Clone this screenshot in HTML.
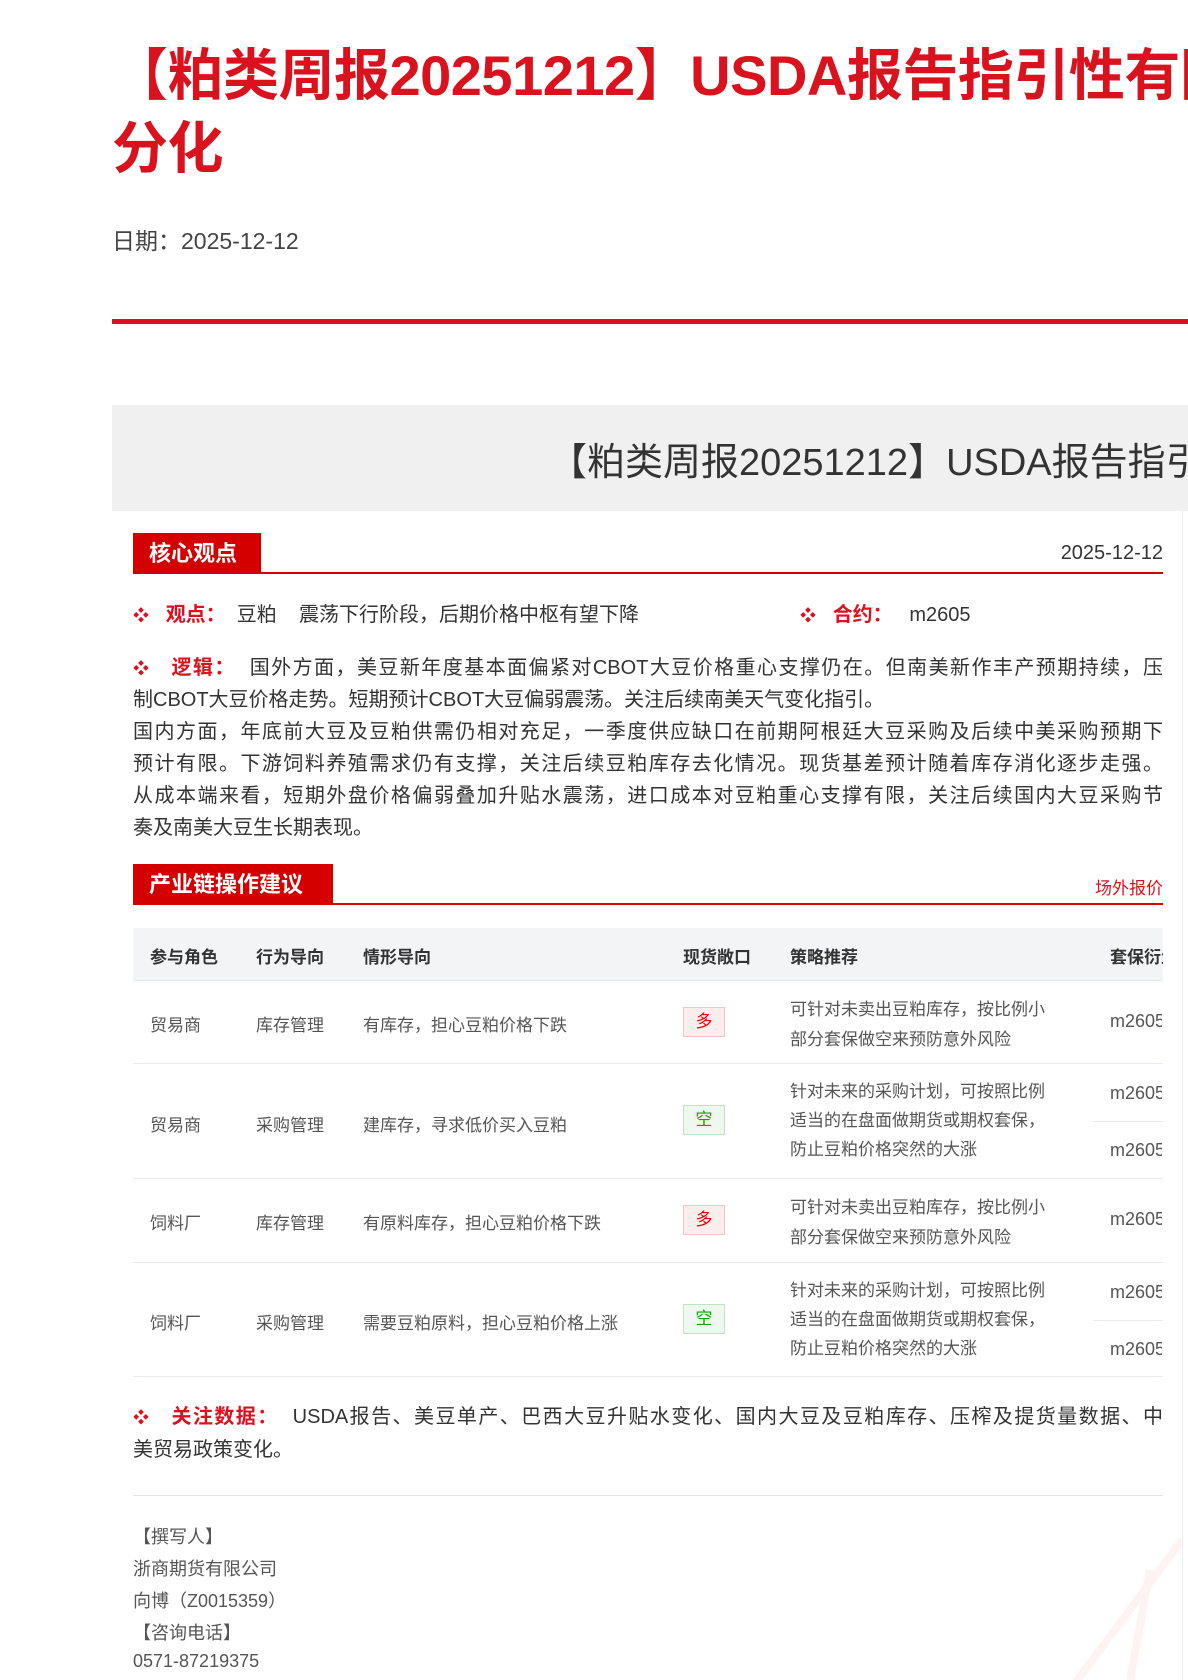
<!DOCTYPE html>
<html><head><meta charset="utf-8">
<style>
*{margin:0;padding:0;box-sizing:border-box}
html,body{width:1188px;height:1680px;overflow:hidden}
body{background:#fff;font-family:"Liberation Sans","Noto Sans CJK SC",sans-serif;color:#333}
#w{position:relative;width:1188px;height:1680px;overflow:hidden}
.a{position:absolute;white-space:nowrap}
.t{font-size:56px;font-weight:bold;color:#d9121e;left:112px;line-height:73px;letter-spacing:-0.5px;width:1076px;overflow:hidden}
.red{color:#d9121e}
.tag{position:absolute;background:#d40000;color:#fff;font-weight:bold;font-size:22px;line-height:41px;padding-left:16px}
.hl{position:absolute;height:2px;background:#d40000;left:133px;width:1030px}
.b{font-size:20px;color:#333}
.bul{color:#d9121e;font-size:16px}
.lab{color:#d9121e;font-weight:bold}
.lg{position:absolute;left:133px;width:1030px;font-size:20px;line-height:32px;color:#333;white-space:nowrap;text-align:justify;text-align-last:justify}
.th{font-size:17px;font-weight:bold;color:#333}
.td{font-size:17px;color:#555}
.rl{position:absolute;left:133px;width:1030px;height:1px;background:#e6e9ee}
.bd{position:absolute;width:42px;height:30px;font-size:17px;text-align:center;line-height:28px;border:1px solid}
.duo{color:#e00;background:#fdeeee;border-color:#f6c4c4}
.kong{color:#1a9a1a;background:#eef8ee;border-color:#bfe4bf}
.ft{font-size:18px;color:#555;left:133px}
.m{font-size:18px;color:#555;width:52px;overflow:hidden;left:1110px}
</style></head><body><div id="w">
<div class="a t" style="top:39px">【粕类周报20251212】USDA报告指引性有限，豆粕走势分化</div>
<div class="a t" style="top:112px">分化</div>
<div class="a" style="left:112px;top:222px;font-size:23px;color:#444">日期：2025-12-12</div>
<div class="a" style="left:112px;top:319px;width:1076px;height:5px;background:#d9121e"></div>

<div class="a" style="left:112px;top:405px;width:1076px;height:106px;background:#f0f0f0"></div>
<div class="a" style="left:549px;top:435px;font-size:38px;color:#333;line-height:56px;width:639px;overflow:hidden">【粕类周报20251212】USDA报告指引性有限</div>
<div class="a" style="left:1182px;top:511px;width:1px;height:1169px;background:#eee"></div>

<div class="tag" style="left:133px;top:533px;width:128px">核心观点</div>
<div class="hl" style="top:572px"></div>
<div class="a b" style="right:25px;top:542px">2025-12-12</div>

<div class="a b" style="left:133px;top:600px;line-height:30px"><span class="bul">❖</span>&nbsp;&nbsp;&nbsp;<span class="lab">观点：</span>&nbsp;&nbsp;豆粕&nbsp;&nbsp;&nbsp;&nbsp;震荡下行阶段，后期价格中枢有望下降</div>
<div class="a b" style="left:800px;top:600px;line-height:30px"><span class="bul">❖</span>&nbsp;&nbsp;&nbsp;<span class="lab">合约：</span>&nbsp;&nbsp;&nbsp;m2605</div>

<div class="lg" style="top:652px"><span class="bul">❖</span>&nbsp;&nbsp;&nbsp;<span class="lab">逻辑：</span>&nbsp;&nbsp;国外方面，美豆新年度基本面偏紧对CBOT大豆价格重心支撑仍在。但南美新作丰产预期持续，压</div>
<div class="lg" style="top:684px;text-align-last:left">制CBOT大豆价格走势。短期预计CBOT大豆偏弱震荡。关注后续南美天气变化指引。</div>
<div class="lg" style="top:716px">国内方面，年底前大豆及豆粕供需仍相对充足，一季度供应缺口在前期阿根廷大豆采购及后续中美采购预期下</div>
<div class="lg" style="top:748px">预计有限。下游饲料养殖需求仍有支撑，关注后续豆粕库存去化情况。现货基差预计随着库存消化逐步走强。</div>
<div class="lg" style="top:780px">从成本端来看，短期外盘价格偏弱叠加升贴水震荡，进口成本对豆粕重心支撑有限，关注后续国内大豆采购节</div>
<div class="lg" style="top:812px;text-align-last:left">奏及南美大豆生长期表现。</div>

<div class="tag" style="left:133px;top:864px;width:200px">产业链操作建议</div>
<div class="hl" style="top:903px"></div>
<div class="a red" style="right:25px;top:874px;font-size:17px">场外报价</div>

<div class="a" style="left:133px;top:928px;width:1030px;height:52px;background:#f3f4f6"></div>
<div class="rl" style="top:980px"></div>
<div class="a th" style="left:150px;top:943px">参与角色</div>
<div class="a th" style="left:256px;top:943px">行为导向</div>
<div class="a th" style="left:363px;top:943px">情形导向</div>
<div class="a th" style="left:683px;top:943px">现货敞口</div>
<div class="a th" style="left:790px;top:943px">策略推荐</div>
<div class="a th" style="left:1110px;top:943px;width:53px;overflow:hidden">套保衍生</div>

<div class="a td" style="left:150px;top:1011px">贸易商</div>
<div class="a td" style="left:256px;top:1011px">库存管理</div>
<div class="a td" style="left:363px;top:1011px">有库存，担心豆粕价格下跌</div>
<div class="bd duo" style="left:683px;top:1007px">多</div>
<div class="a td" style="left:790px;top:995px;line-height:30px">可针对未卖出豆粕库存，按比例小<br>部分套保做空来预防意外风险</div>
<div class="a m" style="top:1011px">m2605</div>
<div class="rl" style="top:1063px"></div>

<div class="a td" style="left:150px;top:1111px">贸易商</div>
<div class="a td" style="left:256px;top:1111px">采购管理</div>
<div class="a td" style="left:363px;top:1111px">建库存，寻求低价买入豆粕</div>
<div class="bd kong" style="left:683px;top:1105px">空</div>
<div class="a td" style="left:790px;top:1077px;line-height:29px">针对未来的采购计划，可按照比例<br>适当的在盘面做期货或期权套保，<br>防止豆粕价格突然的大涨</div>
<div class="a m" style="top:1083px">m2605</div>
<div class="a" style="left:1093px;top:1121px;width:70px;height:1px;background:#e6e9ee"></div>
<div class="a m" style="top:1140px">m2605</div>
<div class="rl" style="top:1178px"></div>

<div class="a td" style="left:150px;top:1209px">饲料厂</div>
<div class="a td" style="left:256px;top:1209px">库存管理</div>
<div class="a td" style="left:363px;top:1209px">有原料库存，担心豆粕价格下跌</div>
<div class="bd duo" style="left:683px;top:1205px">多</div>
<div class="a td" style="left:790px;top:1193px;line-height:30px">可针对未卖出豆粕库存，按比例小<br>部分套保做空来预防意外风险</div>
<div class="a m" style="top:1209px">m2605</div>
<div class="rl" style="top:1262px"></div>

<div class="a td" style="left:150px;top:1309px">饲料厂</div>
<div class="a td" style="left:256px;top:1309px">采购管理</div>
<div class="a td" style="left:363px;top:1309px">需要豆粕原料，担心豆粕价格上涨</div>
<div class="bd kong" style="left:683px;top:1304px">空</div>
<div class="a td" style="left:790px;top:1276px;line-height:29px">针对未来的采购计划，可按照比例<br>适当的在盘面做期货或期权套保，<br>防止豆粕价格突然的大涨</div>
<div class="a m" style="top:1282px">m2605</div>
<div class="a" style="left:1093px;top:1320px;width:70px;height:1px;background:#e6e9ee"></div>
<div class="a m" style="top:1339px">m2605</div>
<div class="rl" style="top:1376px"></div>

<div class="lg" style="top:1401px"><span class="bul">❖</span>&nbsp;&nbsp;&nbsp;<span class="lab">关注数据：</span>&nbsp;&nbsp;USDA报告、美豆单产、巴西大豆升贴水变化、国内大豆及豆粕库存、压榨及提货量数据、中</div>
<div class="lg" style="top:1434px;text-align-last:left">美贸易政策变化。</div>
<div class="rl" style="top:1495px;background:#e4e4e4"></div>

<div class="a ft" style="top:1523px">【撰写人】</div>
<div class="a ft" style="top:1555px">浙商期货有限公司</div>
<div class="a ft" style="top:1587px">向博（Z0015359）</div>
<div class="a ft" style="top:1619px">【咨询电话】</div>
<div class="a ft" style="top:1651px">0571-87219375</div>

<svg class="a" style="left:1000px;top:1520px" width="182" height="160"><path d="M182 20 L70 170 M150 50 L130 160" stroke="#fdf3f3" stroke-width="8" fill="none"/></svg>
</div></body></html>
